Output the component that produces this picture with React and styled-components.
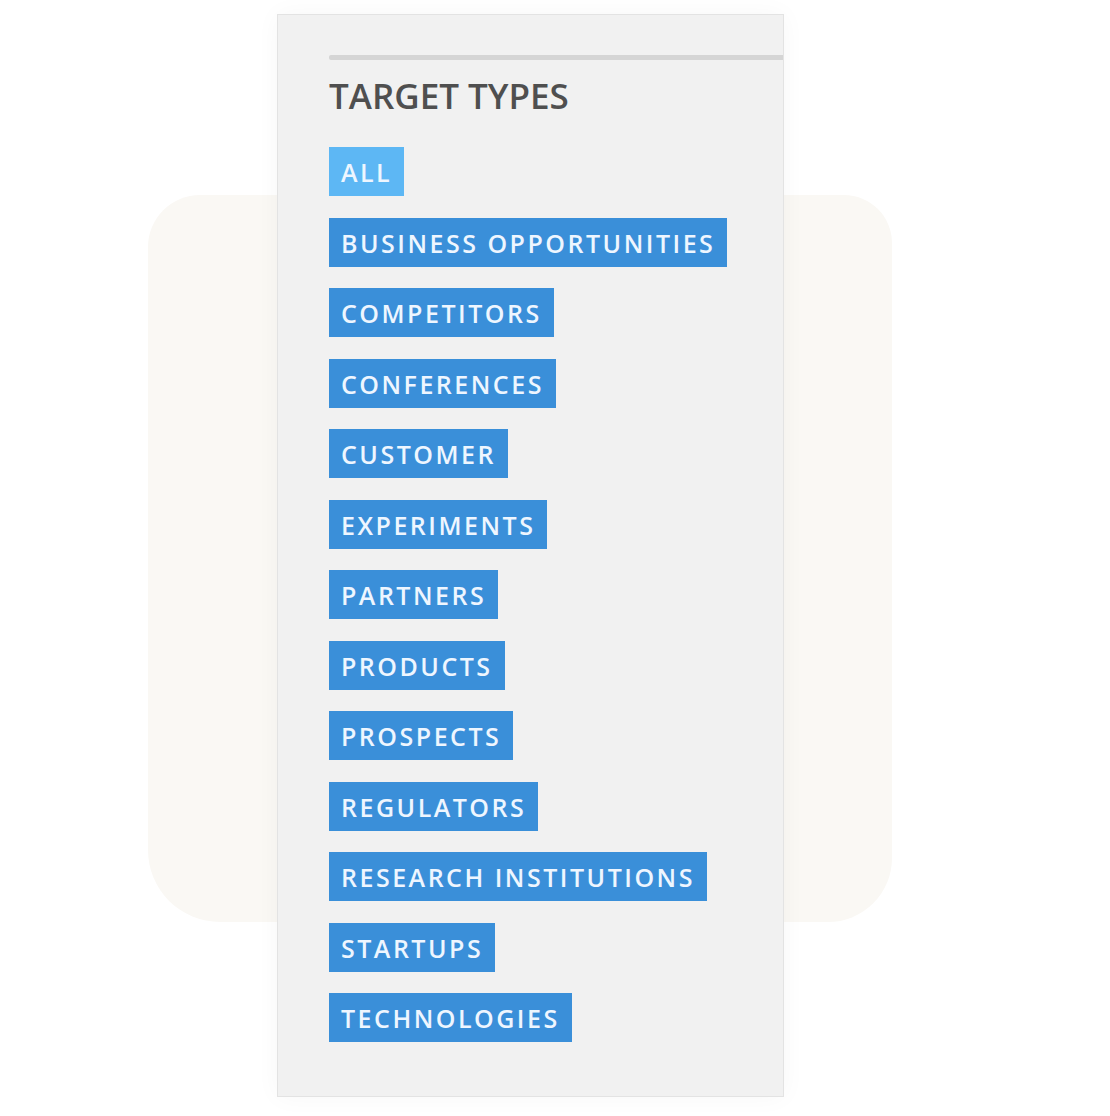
import React from "react";
import styled, { createGlobalStyle } from "styled-components";

const GlobalStyle = createGlobalStyle`
  html, body {
    margin: 0;
    padding: 0;
    background: #ffffff;
  }
  body {
    font-family: "Open Sans", "Noto Sans", sans-serif;
  }
`;

// both layers share one grid cell so the card sits on top of the backdrop
const Stage = styled.div`
  display: grid;
  width: 1110px;
  height: 1116px;
  overflow: hidden;
`;

const Backdrop = styled.div`
  grid-area: 1 / 1;
  align-self: start;
  justify-self: start;
  margin: 195px 0 0 148px;
  width: 744px;
  height: 727px;
  background: #faf8f4;
  border-radius: 52px 48px 64px 72px;
`;

const Panel = styled.section`
  grid-area: 1 / 1;
  align-self: start;
  justify-self: start;
  margin: 14px 0 0 277px;
  width: 507px;
  height: 1083px;
  box-sizing: border-box;
  padding: 40px 0 0 51px;
  background: #f1f1f1;
  border: 1px solid #e3e3e3;
  box-shadow: 0 0 24px rgba(0, 0, 0, 0.035);
`;

const Rule = styled.div`
  height: 5px;
  background: #d5d5d5;
  border-radius: 2px 0 0 2px;
`;

const Title = styled.h2`
  margin: 18px 0 0;
  font-size: 35px;
  line-height: 35px;
  font-weight: 600;
  color: #4f4f4f;
`;

const TagList = styled.ul`
  list-style: none;
  margin: 34px 0 0;
  padding: 0;
  display: flex;
  flex-direction: column;
  align-items: flex-start;
  gap: 21.5px;
`;

const Tag = styled.li`
  height: 49px;
  padding: 2px 12px 0;
  box-sizing: border-box;
  font-size: 25px;
  line-height: 47px;
  font-weight: 600;
  letter-spacing: 2.5px;
  color: #eef6ff;
  white-space: nowrap;
  background: ${(p) => (p.$active ? "#5db7f4" : "#3a8fd9")};
`;

const types = [
  "BUSINESS OPPORTUNITIES",
  "COMPETITORS",
  "CONFERENCES",
  "CUSTOMER",
  "EXPERIMENTS",
  "PARTNERS",
  "PRODUCTS",
  "PROSPECTS",
  "REGULATORS",
  "RESEARCH INSTITUTIONS",
  "STARTUPS",
  "TECHNOLOGIES",
];

export default function App() {
  return (
    <>
      <GlobalStyle />
      <Stage>
        <Backdrop />
        <Panel>
          <Rule />
          <Title>TARGET TYPES</Title>
          <TagList>
            <Tag $active>ALL</Tag>
            {types.map((t) => (
              <Tag key={t}>{t}</Tag>
            ))}
          </TagList>
        </Panel>
      </Stage>
    </>
  );
}
